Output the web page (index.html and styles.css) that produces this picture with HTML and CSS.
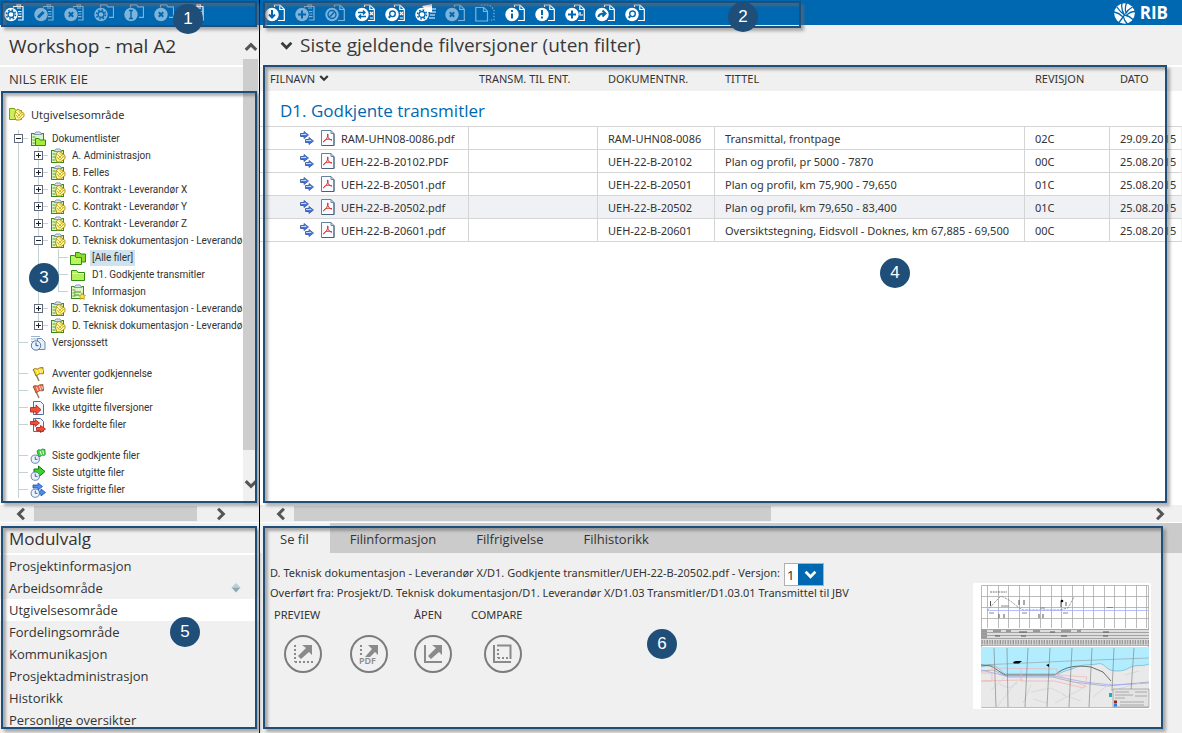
FILE: index.html
```html
<!DOCTYPE html>
<html lang="no">
<head>
<meta charset="utf-8">
<title>Workshop - mal A2</title>
<link rel="stylesheet" href="styles.css">
</head>
<body>
<svg class="sprite" aria-hidden="true">
  <defs>
    <symbol id="clip" viewBox="0 0 20 18"><path class="ln" d="M9.500 3.500V2.500h9.500v13.500H14M13 2.500V.8h3.500v1.700M13 4h4M14 7.500h3.500M14.500 10h3M14 12.700h3.500"/></symbol>
    <symbol id="doc" viewBox="0 0 20 18"><path class="ln" d="M9.500 3V1h5.500l4.300 4.300V16.500H13M14.800 1v4.500h4.500"/></symbol>
    <symbol id="fold" viewBox="0 0 20 18"><path class="ln" d="M6.500 3.500V.8h6l1.500 2h5.500v10.500h-4.500"/></symbol>
    <symbol id="disc" viewBox="0 0 20 18"><circle cx="7" cy="10.500" r="6.700" fill="currentColor"/></symbol>
    <symbol id="gear" viewBox="0 0 20 18"><circle cx="7" cy="10.500" r="3" fill="none" stroke="#0067b1" stroke-width="1.300"/><circle cx="7" cy="10.500" r="4.500" fill="none" stroke="#0067b1" stroke-width="1.500" stroke-dasharray="1.700 1.830"/></symbol>
    <symbol id="cross" viewBox="0 0 20 18"><path class="ct" d="M4.800 8.300l4.400 4.400M9.200 8.300l-4.400 4.400"/></symbol>
    <symbol id="plus" viewBox="0 0 20 18"><path class="ct" d="M7 6.500v8M3 10.500h8"/></symbol>
    <symbol id="loupe" viewBox="0 0 20 18"><circle class="ct thin" cx="7.500" cy="9.800" r="2.800"/><path class="ct" d="M5.500 12l-1.800 1.800"/></symbol>

    <symbol id="t-list" viewBox="0 0 16 16"><rect x="1.500" y="2.500" width="12" height="12" fill="#dff5c4" stroke="#3c8a1c"/><path d="M4 3.500l2-2.500h4l2 2.500z" fill="#dbe8f2" stroke="#7c9bb0"/><path d="M2.500 6h3M2.500 9h3M2.500 12h3" stroke="#4ca82a"/></symbol>
    <symbol id="t-hand" viewBox="0 0 16 16"><path d="M5.500 10l1-5 2.500-2 6 4.500v3L10.500 14H7z" fill="#fff6a8" stroke="#a8920c"/><path d="M7 6l5 5M9 4.500l4.500 4.500M7 9l3 3.500M8 11l5-5M10 12l4-4" stroke="#c9a90a" stroke-width=".8"/></symbol>
    <symbol id="t-folder" viewBox="0 0 16 16"><path d="M1.500 13.500v-10h5l1.500 2h6.500v8z" fill="#b4f05a" stroke="#2f8d12"/><path d="M2.500 6.500H14" stroke="#f0ffd6"/></symbol>
    <symbol id="t-folders" viewBox="0 0 16 16"><path d="M5.500 12V2.500h4L11 4h4.500v8z" fill="#8ddb2c" stroke="#2f8d12"/><path d="M.5 14.500v-9h4l1.500 2h5.500v7z" fill="#b9f462" stroke="#2f8d12"/></symbol>
    <symbol id="t-root" viewBox="0 0 16 16"><path d="M.5 13.500V2.500h5L7 4.500h5.500v9z" fill="#c8ef5e" stroke="#7d9c10"/><use href="#t-hand"/></symbol>
    <symbol id="t-lists" viewBox="0 0 16 16"><use href="#t-list"/><path d="M5.500 14.500v-7h3.500l1 1.500h5.500v5.500z" fill="#a6ec3c" stroke="#2f8d12"/></symbol>
    <symbol id="t-doc" viewBox="0 0 16 16"><use href="#t-list"/><use href="#t-hand"/></symbol>
    <symbol id="t-info" viewBox="0 0 16 16"><use href="#t-list"/><path d="M4 8h7M4 11h5" stroke="#3c8a1c"/><path d="M12 9l1.200 2 2.300.3-1.500 1.700.3 2.300-2.300-1-2 1 .3-2.300L9 11.500l2.200-.4z" fill="#ffe14a" stroke="#a8920c" stroke-width=".7"/></symbol>
    <symbol id="t-clock" viewBox="0 0 16 16"><circle cx="6" cy="10.500" r="4.700" fill="#eaf3fd" stroke="#55749f"/><path d="M6 7.500v3.200h2.500" fill="none" stroke="#33507c"/></symbol>
    <symbol id="t-versions" viewBox="0 0 16 16"><path d="M1 1.500h9M1 4h9M1 6.500h3" stroke="#9ab5cf"/><path d="M7.500 3.500h4l3.500 3.500v7.500H7.500z" fill="#e4effa" stroke="#6d8cb5"/><use href="#t-clock"/></symbol>
    <symbol id="t-flag" viewBox="0 0 16 16"><path d="M3.500 3l5.500 12" stroke="#8b7a5e" stroke-width="1.400"/><path d="M3 4c2-3 3.500 0 5.500-1.500S11.500 2 13 1.500c-.5 2 1 4 .5 6-2 1-3-.5-4.500.5s-2 1.500-3 2C5 8 5 6 3 4z" fill="currentColor" stroke="#7a5a20" stroke-width=".8"/><path d="M6.500 4l1.500 4M9.500 3l1.300 4.300M11.700 3l.8 3" stroke="#fff" stroke-width=".8"/></symbol>
    <symbol id="t-redo" viewBox="0 0 16 16"><path d="M3.500 1.500h7l3 3v10h-10z" fill="#f2f7fd" stroke="#4f6e9e"/><path d="M.5 7.500H6V5l5 4.700-5 4.800V12H.5z" fill="#f0503a" stroke="#b31b0c" stroke-width=".8"/></symbol>
    <symbol id="t-redo2" viewBox="0 0 16 16"><path d="M3.500 1.500h7l3 3v10h-10z" fill="#f2f7fd" stroke="#4f6e9e"/><path d="M.5 4.500H5v-2L9.500 6 5 9.500v-2H.5zM6.500 10.500h4v-2L15.500 12l-5 3.500v-2h-4z" fill="#f0503a" stroke="#b31b0c" stroke-width=".8"/></symbol>
    <symbol id="t-approved" viewBox="0 0 16 16"><path d="M7 3c2-2.500 3 0 4.500-1.500S14 2 15 1.500c-.5 2 .8 3.500 0 5.500-1.500 1-2.500-.5-3.500.5S9.500 9 8.500 9z" fill="#3ed645" stroke="#2b7d2c" stroke-width=".8"/><path d="M10 3l1.500 4M12.800 2.500l1 4" stroke="#fff"/><g transform="translate(0 2)"><use href="#t-clock" width="14" height="14"/></g></symbol>
    <symbol id="t-issued" viewBox="0 0 16 16"><path d="M4 4h4.500V1l6.500 5.500L8.500 12V9H4z" fill="#37d42a" stroke="#14720f"/><g transform="translate(0 2)"><use href="#t-clock" width="14" height="14"/></g></symbol>
    <symbol id="t-released" viewBox="0 0 16 16"><path d="M3 3h5V1l4.500 3.500L8 8V6H3zM8 9h3V7l4.500 3.500L11 14v-2H8z" fill="#4d8df0" stroke="#1f4fae" stroke-width=".8"/><g transform="translate(0 2)"><use href="#t-clock" width="14" height="14"/></g></symbol>

    <symbol id="arrows" viewBox="0 0 14 14"><path d="M.5 2.500H4v-2L8.500 4 4 7.500v-2H.5zM5.500 8.500H9v-2l4.500 3.500L9 13.500v-2H5.500z" fill="#5590ee" stroke="#3b4f86" stroke-width=".8"/><path d="M1 3.500h5M6 9.500h5" stroke="#bcd9ff"/><path d="M1 5h6M6 11h6" stroke="#2a5be0"/></symbol>
    <symbol id="pdf" viewBox="0 0 14 16"><path d="M.5.500h9.500l3 3v12H.5z" fill="#f8fbff" stroke="#64829c"/><path d="M13 4v11.500H1" fill="none" stroke="#4b6078"/><path d="M10 .500v3h3" fill="none" stroke="#64829c"/><path d="M6.500 4c1.500 0 0 4.500-4 8 1-3 5-3.500 8.500-2-3 0-4.500-3-4.500-6z" fill="none" stroke="#d8312c"/></symbol>
    <symbol id="chev" viewBox="0 0 12 12"><path d="M1.500 3.500L6 8l4.500-4.500" fill="none" stroke="currentColor" stroke-width="2.600"/></symbol>
  </defs>
</svg>

<div class="app">
  <header class="bar bar-left">
    <button class="tool" aria-label="Innstillinger"><svg><use href="#clip"/><use href="#disc"/><use href="#gear"/></svg></button>
    <button class="tool off" aria-label="Rediger"><svg><use href="#clip"/><use href="#disc"/><path class="ct wide" d="M4 13.500l5.500-5.500"/></svg></button>
    <button class="tool off" aria-label="Slett liste"><svg><use href="#clip"/><use href="#disc"/><use href="#cross"/></svg></button>
    <button class="tool off" aria-label="Mappeinnstillinger"><svg><use href="#fold"/><use href="#disc"/><use href="#gear"/></svg></button>
    <button class="tool off" aria-label="Gi nytt navn"><svg><use href="#fold"/><use href="#disc"/><path class="ct thin" d="M7 6.500v8M5 6.500h4M5 14.500h4"/></svg></button>
    <button class="tool off" aria-label="Slett mappe"><svg><use href="#fold"/><use href="#disc"/><use href="#cross"/></svg></button>
    <button class="tool" aria-label="Liste"><svg><use href="#clip"/></svg></button>
    <div class="mark mark-1"><span class="badge">1</span></div>
  </header>

  <header class="bar bar-right">
    <button class="tool" aria-label="Last ned"><svg><use href="#doc"/><use href="#disc"/><path class="ct" d="M7 6v7M4 10.500l3 3 3-3"/></svg></button>
    <button class="tool off" aria-label="Legg til liste"><svg><use href="#clip"/><use href="#disc"/><use href="#plus"/></svg></button>
    <button class="tool off" aria-label="Avvis"><svg><use href="#doc"/><use href="#disc"/><circle class="ct thin" cx="7" cy="10.500" r="4"/><path class="ct thin" d="M4.500 13l5-5"/></svg></button>
    <button class="tool" aria-label="Bytt"><svg><use href="#doc"/><use href="#disc"/><path class="ct thin" d="M3 8.500h7M8 6.500l2 2-2 2M11 12.500H4M6 10.500l-2 2 2 2"/><path class="ln" d="M15 8l3 3M18 8l-3 3M15 14h3"/></svg></button>
    <button class="tool" aria-label="Finn versjon"><svg><use href="#doc"/><use href="#disc"/><use href="#loupe"/><path class="ln" d="M15 8l3 3M18 8l-3 3M15 14h3"/></svg></button>
    <button class="tool" aria-label="Egenskaper"><svg><path fill="currentColor" d="M7 2l10-2v8h-5z"/><use href="#disc"/><use href="#gear"/><path class="ln" d="M15 5h6M15 8h6M15 11h5M14 14h6"/></svg></button>
    <button class="tool off" aria-label="Slett fil"><svg><use href="#doc"/><use href="#disc"/><use href="#cross"/></svg></button>
    <button class="tool off" aria-label="Kopier"><svg><path class="ln" d="M.800 3.500h8l3.700 3.700v9.800H.8zM8.500 3.500v4h4"/><path class="ln dots" d="M6 1h8.500l4.500 4.500V16h-5"/></svg></button>
    <button class="tool" aria-label="Informasjon"><svg><use href="#doc"/><use href="#disc"/><path class="ct" d="M7 6v2M7 9.500v5"/></svg></button>
    <button class="tool" aria-label="Viktig"><svg><use href="#doc"/><use href="#disc"/><path class="ct" d="M7 6v5M7 12.500v2"/></svg></button>
    <button class="tool" aria-label="Ny fil"><svg><use href="#doc"/><use href="#disc"/><use href="#plus"/><path class="ln" d="M15 8v3h3"/></svg></button>
    <button class="tool" aria-label="Send"><svg><use href="#doc"/><use href="#disc"/><path class="ct" d="M3.500 13c0-2.500 2-3.500 6-3.500M7.500 6.500l3 3-3 3"/></svg></button>
    <button class="tool" aria-label="Søk"><svg><use href="#doc"/><use href="#disc"/><use href="#loupe"/></svg></button>
    <div class="brand">
      <svg width="21" height="21" viewBox="0 0 21 21" aria-hidden="true"><circle cx="10.500" cy="10.500" r="10.300" fill="#fff"/><g fill="none" stroke="#0067b1" stroke-width="1.300"><path d="M8 0c-1 4 0 8 2.500 12M12.500 0c-1.500 4-1.500 7-.5 10M10.500 12l-5.500 7.500M10.500 12c3 .5 6 2 8.500 4.500M2.500 3.500c2 3 4.500 6 8 8.500M0 9c3 .5 6 2 8.500 4.500M18.500 4c-3 1.500-5.500 4-7 7M21 8.500c-3 0-6 1-8.500 4M9.500 14c.5 3 2 5 4 7"/></g></svg>
      <span>RIB</span>
    </div>
    <div class="mark mark-2"><span class="badge">2</span></div>
  </header>

  <aside class="explorer">
    <div class="explorer-body">
      <div class="explorer-main">
        <h1 class="project">Workshop - mal A2</h1>
        <p class="user">NILS ERIK EIE</p>
        <nav class="tree">
          <div class="root"><svg class="ti"><use href="#t-root"/></svg>Utgivelsesområde</div>
          <ul class="branch">
            <li><div class="row"><button class="tog" aria-label="Skjul"></button><svg class="ti"><use href="#t-lists"/></svg>Dokumentlister</div>
              <ul class="branch sub">
                <li><div class="row"><button class="tog plus" aria-label="Vis"></button><svg class="ti"><use href="#t-doc"/></svg>A. Administrasjon</div></li>
                <li><div class="row"><button class="tog plus" aria-label="Vis"></button><svg class="ti"><use href="#t-doc"/></svg>B. Felles</div></li>
                <li><div class="row"><button class="tog plus" aria-label="Vis"></button><svg class="ti"><use href="#t-doc"/></svg>C. Kontrakt - Leverandør X</div></li>
                <li><div class="row"><button class="tog plus" aria-label="Vis"></button><svg class="ti"><use href="#t-doc"/></svg>C. Kontrakt - Leverandør Y</div></li>
                <li><div class="row"><button class="tog plus" aria-label="Vis"></button><svg class="ti"><use href="#t-doc"/></svg>C. Kontrakt - Leverandør Z</div></li>
                <li><div class="row"><button class="tog" aria-label="Skjul"></button><svg class="ti"><use href="#t-doc"/></svg>D. Teknisk dokumentasjon - Leverandø</div>
                  <ul class="branch sub">
                    <li><div class="row"><i class="leaf"></i><svg class="ti"><use href="#t-folders"/></svg><span class="current">[Alle filer]</span></div></li>
                    <li><div class="row"><i class="leaf"></i><svg class="ti"><use href="#t-folder"/></svg>D1. Godkjente transmitler</div></li>
                    <li><div class="row"><i class="leaf"></i><svg class="ti"><use href="#t-info"/></svg>Informasjon</div></li>
                  </ul></li>
                <li><div class="row"><button class="tog plus" aria-label="Vis"></button><svg class="ti"><use href="#t-doc"/></svg>D. Teknisk dokumentasjon - Leverandø</div></li>
                <li><div class="row"><button class="tog plus" aria-label="Vis"></button><svg class="ti"><use href="#t-doc"/></svg>D. Teknisk dokumentasjon - Leverandø</div></li>
              </ul></li>
            <li><div class="row"><i class="leaf"></i><svg class="ti"><use href="#t-versions"/></svg>Versjonssett</div></li>
            <li class="spaced"><div class="row"><i class="leaf"></i><svg class="ti yellow"><use href="#t-flag"/></svg>Avventer godkjennelse</div></li>
            <li><div class="row"><i class="leaf"></i><svg class="ti red"><use href="#t-flag"/></svg>Avviste filer</div></li>
            <li><div class="row"><i class="leaf"></i><svg class="ti"><use href="#t-redo"/></svg>Ikke utgitte filversjoner</div></li>
            <li><div class="row"><i class="leaf"></i><svg class="ti"><use href="#t-redo2"/></svg>Ikke fordelte filer</div></li>
            <li class="spaced"><div class="row"><i class="leaf"></i><svg class="ti"><use href="#t-approved"/></svg>Siste godkjente filer</div></li>
            <li><div class="row"><i class="leaf"></i><svg class="ti"><use href="#t-issued"/></svg>Siste utgitte filer</div></li>
            <li><div class="row"><i class="leaf"></i><svg class="ti"><use href="#t-released"/></svg>Siste frigitte filer</div></li>
          </ul>
        </nav>
      </div>
      <div class="vscroll">
        <button class="arrow" aria-label="Rull opp"><svg class="up"><use href="#chev"/></svg></button>
        <div class="vthumb"></div>
        <div class="vrest"></div>
        <button class="arrow" aria-label="Rull ned"><svg><use href="#chev"/></svg></button>
      </div>
    </div>
    <div class="hscroll short">
      <button class="arrow" aria-label="Rull til venstre"><svg class="west"><use href="#chev"/></svg></button>
      <div class="hthumb"></div>
      <button class="arrow" aria-label="Rull til høyre"><svg class="east"><use href="#chev"/></svg></button>
    </div>
    <div class="mark mark-3"><span class="badge">3</span></div>
  </aside>

  <main class="files">
    <h2 class="view-title"><svg><use href="#chev"/></svg>Siste gjeldende filversjoner (uten filter)</h2>
    <div class="grid-area">
      <table class="filetable">
        <colgroup><col class="c-name"><col class="c-trans"><col class="c-doc"><col class="c-title"><col class="c-rev"><col></colgroup>
        <thead>
          <tr><th scope="col">FILNAVN <svg class="sort"><use href="#chev"/></svg></th><th scope="col">TRANSM. TIL ENT.</th><th scope="col">DOKUMENTNR.</th><th scope="col">TITTEL</th><th scope="col">REVISJON</th><th scope="col">DATO</th></tr>
        </thead>
        <tbody>
          <tr class="group"><th colspan="6" scope="colgroup">D1. Godkjente transmitler</th></tr>
          <tr><td><div class="file"><svg class="fa"><use href="#arrows"/></svg><svg class="fp"><use href="#pdf"/></svg>RAM-UHN08-0086.pdf</div></td><td></td><td>RAM-UHN08-0086</td><td>Transmittal, frontpage</td><td>02C</td><td>29.09.2015</td></tr>
          <tr><td><div class="file"><svg class="fa"><use href="#arrows"/></svg><svg class="fp"><use href="#pdf"/></svg>UEH-22-B-20102.PDF</div></td><td></td><td>UEH-22-B-20102</td><td>Plan og profil, pr 5000 - 7870</td><td>00C</td><td>25.08.2015</td></tr>
          <tr><td><div class="file"><svg class="fa"><use href="#arrows"/></svg><svg class="fp"><use href="#pdf"/></svg>UEH-22-B-20501.pdf</div></td><td></td><td>UEH-22-B-20501</td><td>Plan og profil, km 75,900 - 79,650</td><td>01C</td><td>25.08.2015</td></tr>
          <tr class="picked"><td><div class="file"><svg class="fa"><use href="#arrows"/></svg><svg class="fp"><use href="#pdf"/></svg>UEH-22-B-20502.pdf</div></td><td></td><td>UEH-22-B-20502</td><td>Plan og profil, km 79,650 - 83,400</td><td>01C</td><td>25.08.2015</td></tr>
          <tr><td><div class="file"><svg class="fa"><use href="#arrows"/></svg><svg class="fp"><use href="#pdf"/></svg>UEH-22-B-20601.pdf</div></td><td></td><td>UEH-22-B-20601</td><td>Oversiktstegning, Eidsvoll - Doknes, km 67,885 - 69,500</td><td>00C</td><td>25.08.2015</td></tr>
        </tbody>
      </table>
    </div>
    <div class="hscroll">
      <button class="arrow" aria-label="Rull til venstre"><svg class="west"><use href="#chev"/></svg></button>
      <div class="hthumb"></div>
      <div class="hrest"></div>
      <button class="arrow" aria-label="Rull til høyre"><svg class="east"><use href="#chev"/></svg></button>
    </div>
    <div class="mark mark-4"><span class="badge">4</span></div>
  </main>

  <nav class="modules">
    <h2 class="modules-title">Modulvalg</h2>
    <ul>
      <li><a href="#">Prosjektinformasjon</a></li>
      <li><a href="#">Arbeidsområde<svg width="12" height="10" viewBox="0 0 12 10" aria-hidden="true"><path d="M6 0l4.500 4.500h-9z" fill="#b9d0d8"/><path d="M6 9.500l4.500-5h-9z" fill="#8fa9b3"/></svg></a></li>
      <li><a href="#" class="active">Utgivelsesområde</a></li>
      <li><a href="#">Fordelingsområde</a></li>
      <li><a href="#">Kommunikasjon</a></li>
      <li><a href="#">Prosjektadministrasjon</a></li>
      <li><a href="#">Historikk</a></li>
      <li><a href="#">Personlige oversikter</a></li>
    </ul>
    <div class="mark mark-5"><span class="badge">5</span></div>
  </nav>

  <section class="details">
    <div class="tabs">
      <button class="tab on">Se fil</button>
      <button class="tab">Filinformasjon</button>
      <button class="tab">Filfrigivelse</button>
      <button class="tab">Filhistorikk</button>
    </div>
    <div class="detail-body">
      <div class="info">
        <div class="path"><label for="version">D. Teknisk dokumentasjon - Leverandør X/D1. Godkjente transmitler/UEH-22-B-20502.pdf - Versjon:</label>
          <span class="pick"><select id="version"><option>1</option></select><svg><use href="#chev"/></svg></span></div>
        <p class="origin">Overført fra: Prosjekt/D. Teknisk dokumentasjon/D1. Leverandør X/D1.03 Transmitler/D1.03.01 Transmittel til JBV</p>
        <div class="actions">
          <div class="act a1"><span>PREVIEW</span>
            <button aria-label="Preview"><svg viewBox="0 0 38 38"><circle cx="19" cy="19" r="18"/><path class="dotted" d="M11 10v17M11 27h18"/><path class="fill" d="M18 10h10v10l-3-3-8 7-3-3 8-8z"/></svg></button></div>
          <div class="act a2"><span>&nbsp;</span>
            <button aria-label="Preview PDF"><svg viewBox="0 0 38 38"><circle cx="19" cy="19" r="18"/><path class="dotted" d="M11 10v10"/><path class="fill" d="M18 10h10v10l-3-3-5 5h-5l7-8z"/><text x="9" y="29">PDF</text></svg></button></div>
          <div class="act a3"><span>ÅPEN</span>
            <button aria-label="Åpen"><svg viewBox="0 0 38 38"><circle cx="19" cy="19" r="18"/><path class="solid" d="M11 10v17h17"/><path class="fill" d="M18 10h10v10l-3-3-8 7-3-3 8-8z"/></svg></button></div>
          <div class="act a4"><span>COMPARE</span>
            <button aria-label="Compare"><svg viewBox="0 0 38 38"><circle cx="19" cy="19" r="18"/><path class="solid" d="M10 10v17h17M13 10.500h13.500V24"/><path class="dotted" d="M14 14v9M14 23h11"/></svg></button></div>
        </div>
      </div>
      <svg class="preview" viewBox="0 0 178 126" role="img" aria-label="Tegning">
        <defs>
          <pattern id="ticks" width="2.600" height="6" patternUnits="userSpaceOnUse" x="8" y="56"><path d="M1 0v6" stroke="#555" stroke-width=".8"/></pattern>
        </defs>
        <rect width="178" height="126" fill="#fff"/>
        <path d="M14.500 2v43M25.500 2v43M35.500 2v43M46.500 2v43M56.500 2v43M67.500 2v43M78.500 2v43M88.500 2v43M99.500 2v43M110.500 2v43M120.500 2v43M131.500 2v43M141.500 2v43M152.500 2v43M163.500 2v43M173.500 2v43" stroke="#aaa" stroke-width=".8"/>
        <path d="M8.500 2.500h167v122h-167zM8 13.500h168M8 24.500h168M8 35.500h168" fill="none" stroke="#aaa" stroke-width=".8"/>
        <path d="M17 9h17" stroke="#777" stroke-dasharray="2 .7"/>
        <path d="M14 28l8-9 6-6 8 4 9 7 5 3h36l9-2 6-11" fill="none" stroke="#888" stroke-width=".8" stroke-dasharray="2.500 1"/>
        <path d="M14 27.500h161" stroke="#9faeff" stroke-width=".8"/>
        <path d="M17.500 18v5M26 31v4M31 31v4M46 17v5M51 17v5M66 31v4M70 31v4M88 18v6M93 19v4" stroke="#555" stroke-width="1"/>
        <path d="M28 23h8M67 25h5M134 24.500h6M16 30h5M49 30h5M90 30h5" stroke="#888" stroke-width="1"/>
        <circle cx="89" cy="18" r="1.300"/>
        <path d="M8 46h168v16H8z" fill="#dedede"/>
        <path d="M8 46.500h168M8 49.500h168M8 52.500h168M8 55.500h168M8 62.500h168" stroke="#8a8a8a" stroke-width=".7"/>
        <path d="M8 48h6M8 51h6M8 54h6M20 48h8M33 48h5M46 49h8M60 48h7M77 49h5M88 48h10M104 48h4M130 49h6M22 53h5M48 53h5M88 53h6M130 53h5" stroke="#555" stroke-width="1"/>
        <path d="M8 57h168v4.500H8z" fill="url(#ticks)"/>
        <path d="M8 64h168v60H8z" fill="#e9e9ea"/>
        <path d="M8 64h168v17c-8 3-14 0-20 4s-18 4-22 0-6-5-10-4-13 0-20 3-14 4-18 7H32c-5-4-9-9-16-9l-8 2z" fill="#b2edff"/>
        <path d="M176 81c-8 3-14 0-20 4s-18 4-22 0-6-5-10-4-13 0-20 3-14 4-18 7H32c-5-4-9-9-16-9l-8 2" fill="none" stroke="#6bbdd8" stroke-width=".8"/>
        <path d="M8 82l10 1 14 9h50c10-9 22-10 36-8l12 5 8 9" fill="none" stroke="#6a6a6a"/>
        <path d="M8 88l12-1 15 7h45l20 5 34 4 42-4" fill="none" stroke="#a5a8b0" stroke-width=".8"/>
        <path d="M8 87l25 6h48l30 6 28 3 37-2" fill="none" stroke="#9ba8ff" stroke-width=".8"/>
        <path d="M8 90h11v8H8M18 85l66 1v6l30 2-3 11-30-7H48V86M8 98l42-1M82 91l32 13" fill="none" stroke="#f2b0b0" stroke-width=".7"/>
        <path d="M18 107l14-13M24 124l20-26M50 120l8-18M82 120l30-16M120 114l20-16M60 116l14 4M90 112l18 6M145 106l22-6M152 92l14-4M26 101l10 4 8-5M58 109l20-4 14 7" fill="none" stroke="#d2d4d7" stroke-width=".8"/>
        <path d="M21 65l2 59M34 65l1 59M55 65l-3 59M77 65l-3 59M99 65l-3 59M119 65l-3 59M141 65l-2 43M161 65l-3 43" stroke="#777" stroke-width=".6"/>
        <path d="M8 82l88-4 80-3" fill="none" stroke="#888" stroke-width=".5"/>
        <path d="M40 79l3-1h6l-3 2.500h-5zM73 82l3-1v3z"/>
        <path d="M140 106h36v18h-36z" fill="#e3e3e3" stroke="#888" stroke-width=".6"/>
        <path d="M142 109h14M142 112h18M142 115h10M162 109h12M162 113h12M147 119h24M147 122h24" stroke="#999" stroke-width=".8"/>
        <path d="M136 110h3v4h-3z" fill="#20a9c9"/><path d="M141 117.500h3v3h-3z" fill="#8a2a1d"/><path d="M141 121h3v2.500h-3z" fill="#2a7de1"/>
      </svg>
    </div>
    <div class="mark mark-6"><span class="badge">6</span></div>
  </section>
</div>
</body>
</html>
```
FILE: styles.css
```css
* { box-sizing: border-box; }
body {
  margin: 0;
  background: #f0f0f0;
  color: #333;
  font-family: "Noto Sans", "Open Sans", sans-serif;
  font-size: 11px;
}
h1, h2, p, ul { margin: 0; padding: 0; font-weight: 400; }
ul { list-style: none; }
button { border: 0; padding: 0; background: none; color: inherit; font: inherit; }
svg { display: block; flex: none; }
.sprite { position: absolute; width: 0; height: 0; }

.app {
  display: grid;
  grid-template-columns: 260px minmax(0, 1fr);
  grid-template-rows: 25px minmax(0, 1fr) auto;
  height: 100vh;
  overflow: hidden;
}

/* Toolbars */
.bar {
  position: relative;
  z-index: 2;
  display: flex;
  align-items: center;
  gap: 10px;
  padding: 1px 14px 0 4px;
  background: #0067b1;
  color: #fff;
}
.bar-left { border-right: 1px solid #000; }
.bar-right { padding-left: 5px; }
.tool { width: 20px; height: 18px; flex: none; }
.tool svg { width: 20px; height: 18px; overflow: visible; }
.off { color: #7fb3d8; }
.ln { fill: none; stroke: currentColor; stroke-width: 1.2; }
.ct { fill: none; stroke: #0067b1; stroke-width: 2; }
.thin { stroke-width: 1.4; }
.wide { stroke-width: 3; }
.dots { stroke-dasharray: 1.5 1.5; }
.brand {
  display: flex;
  align-items: center;
  gap: 5px;
  margin-left: auto;
  font-family: "Open Sans", sans-serif;
  font-size: 17px;
  font-weight: 700;
  line-height: 22px;
}

/* Numbered frames */
.mark {
  position: absolute;
  border: 2px solid #1f4e79;
  box-shadow: 3px 3px 3px rgba(110, 110, 110, .55), inset 3px 3px 3px rgba(110, 110, 110, .55);
  pointer-events: none;
}
.mark-1 { left: 1px; right: 2px; top: 1px; height: 26px; }
.mark-2 { left: 3px; width: 538px; top: 1px; height: 27px; }
.mark-3 { left: 1px; right: 2px; top: 66px; bottom: 20px; }
.mark-4 { left: 3px; right: 15px; top: 40px; bottom: 20px; }
.mark-5 { left: 1px; right: 2px; top: 3px; bottom: 4px; }
.mark-6 { left: 3px; right: 19px; top: 3px; bottom: 4px; }
.badge {
  position: absolute;
  width: 30px;
  height: 30px;
  border-radius: 50%;
  background: #1f4e79;
  color: #fff;
  font-family: "Liberation Sans", Arial, sans-serif;
  font-size: 17px;
  line-height: 29px;
  text-align: center;
}
.mark-1 .badge { left: 170px; top: 1px; }
.mark-2 .badge { left: 463px; top: -1px; }
.mark-3 .badge { left: 26px; top: 170px; }
.mark-4 .badge { left: 615px; top: 191px; }
.mark-5 .badge { left: 167px; top: 89px; }
.mark-6 .badge { left: 382px; top: 101px; }

/* Explorer */
.explorer {
  position: relative;
  display: flex;
  flex-direction: column;
  min-height: 0;
  border-right: 1px solid #000;
}
.explorer-body { display: flex; flex: 1; min-height: 0; }
.explorer-main { display: flex; flex: 1; flex-direction: column; min-width: 0; }
.project {
  height: 42px;
  padding-left: 9px;
  border-bottom: 2px solid #fff;
  font-family: "Open Sans", sans-serif;
  font-size: 19px;
  line-height: 42px;
}
.user { padding-left: 9px; font-family: "Open Sans", sans-serif; font-size: 13px; line-height: 25px; }
.tree {
  flex: 1;
  min-height: 0;
  overflow: hidden;
  background: #fff;
  font-family: Roboto, "Open Sans", sans-serif;
  font-size: 10px;
  white-space: nowrap;
}
.root {
  display: flex;
  align-items: center;
  gap: 6px;
  height: 38px;
  padding: 6px 0 0 9px;
  font-family: "Noto Sans", sans-serif;
  font-size: 11px;
}
.ti { width: 16px; height: 16px; }
.branch { background: linear-gradient(#c4d2d2, #c4d2d2) 18px 0 / 1px 100% no-repeat; }
.sub { margin-left: 20px; background-size: 1px calc(100% - 8px); }
.row {
  display: flex;
  align-items: center;
  height: 17px;
  padding-left: 14px;
  background: linear-gradient(#c4d2d2, #c4d2d2) 18px 8px / 10px 1px no-repeat;
}
.row .ti { margin: 0 6px 0 7px; }
.leaf { width: 9px; flex: none; }
.tog {
  flex: none;
  width: 9px;
  height: 9px;
  border: 1px solid #5f6a80;
  background: linear-gradient(#222, #222) center / 5px 1px no-repeat #fff;
}
.tog.plus {
  background: linear-gradient(#222, #222) center / 5px 1px no-repeat,
    linear-gradient(#222, #222) center / 1px 5px no-repeat #fff;
}
.spaced { padding-top: 14px; }
.current { margin-left: -2px; padding: 0 2px; background: #cfe3ef; line-height: 16px; }
.yellow { color: #ffd91c; }
.red { color: #f2604c; }

/* Scrollbars */
.arrow { display: flex; align-items: center; justify-content: center; flex: none; color: #555; }
.arrow svg { width: 14px; height: 14px; }
.up { transform: rotate(180deg); }
.west { transform: rotate(90deg); }
.east { transform: rotate(-90deg); }
.vscroll { display: flex; flex-direction: column; width: 16px; padding: 10px 0 9px; }
.vscroll .arrow { width: 16px; height: 24px; }
.vthumb { flex: 391; width: 15px; background: #cdcdcd; }
.vrest { flex: 22; }
.hscroll { display: flex; height: 18px; padding: 1px 0; border-bottom: 1px solid #fff; }
.hscroll .arrow { width: 34px; padding-left: 8px; }
.hscroll .arrow:last-child { width: 46px; padding: 0 0 0 2px; }
.hthumb { flex: 477; background: #cdcdcd; }
.hrest { flex: 365; }
.short { padding-right: 16px; }

/* File list */
.files { position: relative; display: flex; flex-direction: column; min-height: 0; }
.view-title {
  display: flex;
  align-items: center;
  gap: 7px;
  height: 42px;
  padding-left: 20px;
  border-bottom: 2px solid #fff;
  font-family: "Open Sans", sans-serif;
  font-size: 19px;
  color: #3a3a3a;
  white-space: nowrap;
}
.view-title svg { width: 13px; height: 13px; }
.grid-area { flex: 1; min-height: 0; overflow: hidden; background: #fff; }
.filetable { width: 100%; border-collapse: separate; border-spacing: 0; table-layout: fixed; }
.c-name { width: 209px; }
.c-trans { width: 129px; }
.c-doc { width: 117px; }
.c-title { width: 310px; }
.c-rev { width: 85px; }
.filetable th, .filetable td { padding: 0 0 0 10px; text-align: left; white-space: nowrap; font-weight: 400; }
.filetable thead th { height: 24px; padding-bottom: 2px; background: #f0f0f0; }
.sort { display: inline-block; width: 10px; height: 10px; margin-left: 1px; }
.filetable .group th {
  height: 35px;
  padding: 4px 0 0 20px;
  color: #0067b1;
  font-family: "Open Sans", sans-serif;
  font-size: 17px;
  line-height: 24px;
}
.filetable td { height: 23px; border-top: 1px solid #d5d5d5; border-right: 1px solid #d5d5d5; }
.filetable td:last-child { border-right-color: #f0f0f0; }
.filetable tr:last-child td { height: 24px; border-bottom: 1px solid #d5d5d5; }
.picked { background: #eff1f4; }
.file { display: flex; align-items: center; padding-left: 30px; }
.fa { width: 14px; height: 14px; margin-right: 7px; }
.fp { width: 14px; height: 16px; margin-right: 6px; }

/* Modules */
.modules { position: relative; border-right: 1px solid #000; padding-bottom: 2px; font-family: "Open Sans", sans-serif; }
.modules-title {
  height: 32px;
  padding-left: 9px;
  border-bottom: 2px solid #fff;
  font-size: 17px;
  line-height: 32px;
}
.modules a {
  display: flex;
  align-items: center;
  justify-content: space-between;
  height: 22px;
  padding: 0 17px 0 9px;
  color: inherit;
  font-size: 13px;
  text-decoration: none;
}
.modules .active { background: #fff; }

/* Details */
.details { position: relative; }
.tabs { display: flex; height: 30px; background: #cbcbcb; }
.tab { padding: 2px 20px 0; font-family: "Open Sans", sans-serif; font-size: 13px; }
.on { padding-right: 21px; background: #f0f0f0; }
.detail-body { display: flex; align-items: flex-start; padding: 10px 31px 0 10px; }
.info { flex: 1; min-width: 0; white-space: nowrap; }
.path { display: flex; align-items: flex-start; gap: 4px; height: 23px; line-height: 20px; }
.pick { display: grid; grid-template-columns: 14px 24px; border: 1px solid #b0b0b0; background: #fff; }
.pick select {
  grid-area: 1 / 1 / 2 / 3;
  height: 21px;
  padding: 0 0 0 2px;
  border: 0;
  appearance: none;
  background: linear-gradient(90deg, #fff 13px, #0067b1 13px);
  color: #333;
  font: inherit;
  font-size: 13px;
}
.pick svg { grid-area: 1 / 2; place-self: center; width: 13px; height: 13px; color: #fff; pointer-events: none; }
.origin { line-height: 14px; }
.actions { display: flex; padding: 7px 0 0 4px; }
.act { display: flex; flex-direction: column; align-items: flex-start; gap: 12px; line-height: 16px; }
.act button, .act svg { width: 38px; height: 38px; }
.a1 { width: 76px; }
.a1 button { margin-left: 10px; }
.a2 { width: 64px; }
.a3 { width: 57px; }
.a4 button { margin-left: 13px; }
.act circle { fill: none; stroke: #7c7c7c; stroke-width: 2; }
.act text { fill: #8a8a8a; font-size: 9px; font-weight: 600; }
.fill { fill: #8a8a8a; }
.solid { fill: none; stroke: #8a8a8a; stroke-width: 2; }
.dotted { fill: none; stroke: #8a8a8a; stroke-width: 2; stroke-dasharray: 2 2; }
.preview { width: 178px; height: 126px; margin-top: 20px; }
```
